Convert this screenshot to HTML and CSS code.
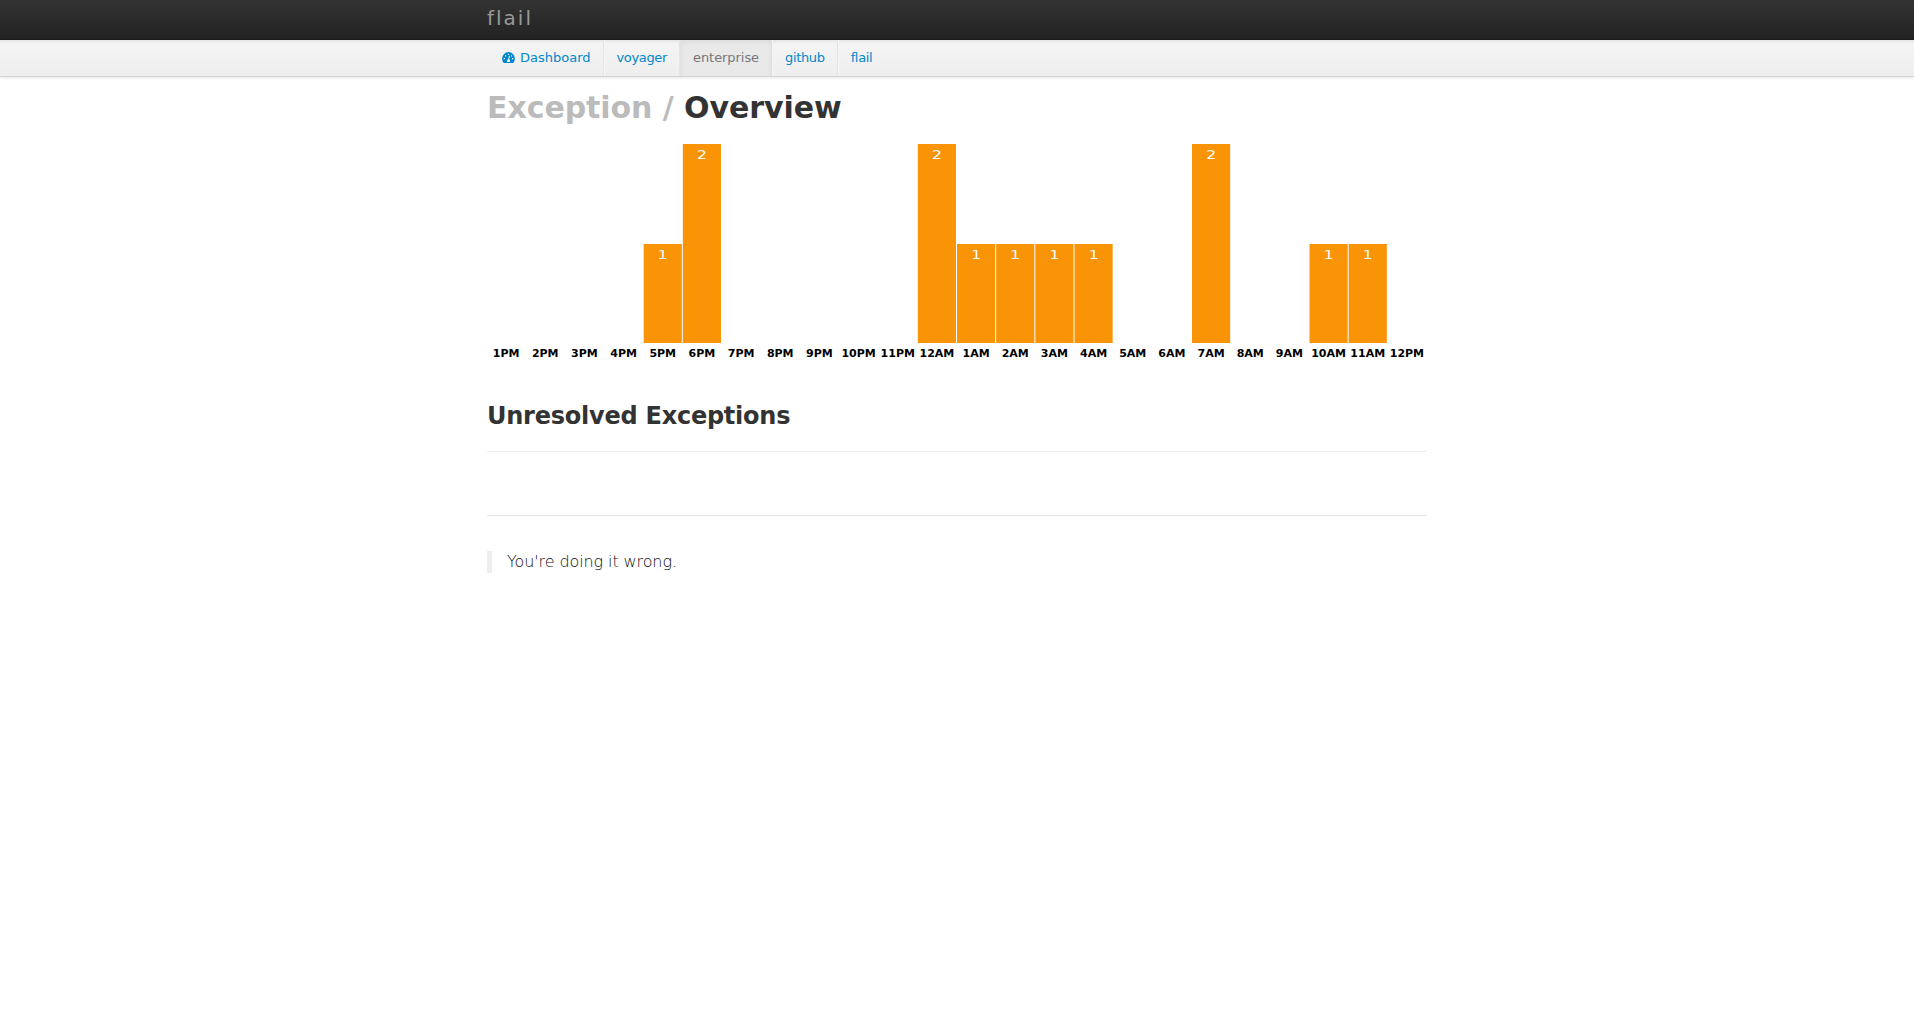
FILE: index.html
```html
<!DOCTYPE html>
<html lang="en">
<head>
<meta charset="utf-8">
<title>flail</title>
<link rel="stylesheet" href="styles.css">
</head>
<body>
<header class="navbar"><div class="container"><a class="brand">flail</a></div></header>
<nav class="subnav">
  <ul class="container tabs">
    <li><a><svg class="icon" viewBox="0 0 13 11"><path fill="currentColor" fill-rule="evenodd" d="M1.7 11A6.3 6.3 0 0 1 .2 6.4a6.3 6.3 0 0 1 12.6 0A6.3 6.3 0 0 1 11.3 11ZM5 10h3V8.2L7.2 7.3 8 4 7.1 3.8 6.2 7.2 5 8.2ZM1.8 6h1.2v1.2H1.8ZM3 3.2h1.2v1.2H3ZM5.9 1.8h1.2v1.1H5.9ZM8.9 3.2h1.2v1.2H8.9ZM10 6h1.2v1.2H10Z"/></svg>Dashboard</a></li>
    <li><a class="tight">voyager</a></li>
    <li class="active"><a>enterprise</a></li>
    <li><a class="tight">github</a></li>
    <li><a class="tight">flail</a></li>
  </ul>
</nav>
<main class="container">
  <h1><span class="muted">Exception /</span> Overview</h1>
  <svg class="chart" id="chart" width="940" height="220"></svg>
  <h2>Unresolved Exceptions</h2>
  <hr class="footer-rule">
  <blockquote>You're doing it wrong.</blockquote>
</main>
<script src="chart.js"></script>
</body>
</html>
```
FILE: chart.js
```js
const hours = ['1PM','2PM','3PM','4PM','5PM','6PM','7PM','8PM','9PM','10PM','11PM','12AM',
  '1AM','2AM','3AM','4AM','5AM','6AM','7AM','8AM','9AM','10AM','11AM','12PM'];
const counts = [0,0,0,0,1,2,0,0,0,0,0,2,1,1,1,1,0,0,2,0,0,1,1,0];
const chart = document.getElementById('chart');
const step = 940 / hours.length;

function add(name, attrs, text) {
  const el = document.createElementNS('http://www.w3.org/2000/svg', name);
  for (const key in attrs) el.setAttribute(key, attrs[key]);
  if (text) el.textContent = text;
  chart.appendChild(el);
}

hours.forEach((hour, i) => {
  const x = i * step;
  const mid = x + (step - 1) / 2;
  if (counts[i]) {
    const y = 200 - counts[i] * 100;
    add('rect', { class: 'bar', x, y, width: step - 1, height: 199 - y });
    add('text', { class: 'count', transform: `translate(${mid} ${y + 15}) scale(1.3 1)` }, String(counts[i]));
  }
  add('text', { class: 'hour', x: mid, y: 213 }, hour);
});
```
FILE: styles.css
```css
body {
  margin: 0;
  background: #fff;
  color: #333;
  font: 13px/18px "DejaVu Sans", sans-serif;
}
.container { width: 940px; margin: 0 auto; }
.navbar {
  height: 40px;
  background: linear-gradient(#333, #222);
  box-shadow: 0 1px 3px rgba(0,0,0,.25), inset 0 -1px 0 rgba(0,0,0,.1);
}
.brand {
  display: block;
  padding-top: 8px;
  font-size: 20px;
  line-height: 20px;
  letter-spacing: 2px;
  color: #999;
}
.subnav {
  height: 36px;
  background: linear-gradient(rgba(0,0,0,.07), transparent 4px), linear-gradient(#f5f5f5, #eee);
  border-bottom: 1px solid #d5d5d5;
  box-shadow: 0 1px 3px rgba(0,0,0,.1);
}
.tabs { display: flex; padding: 0; list-style: none; }
.tabs a {
  display: block;
  height: 18px;
  padding: 9px 12px;
  border-left: 1px solid #f5f5f5;
  border-right: 1px solid #e5e5e5;
  color: #08c;
  letter-spacing: -.06px;
}
.tabs .tight { letter-spacing: -.35px; }
.tabs li:first-child a { border-left: 0; padding-left: 15px; letter-spacing: 0; }
.tabs li:last-child a { border-right: 0; }
.tabs .active a {
  color: #777;
  background: #e9e9e9;
  border-left-color: #e2e2e2;
  border-right-color: #ddd;
  box-shadow: inset 0 3px 5px rgba(0,0,0,.05);
}
.icon { width: 13px; height: 11px; margin-right: 5px; vertical-align: -1px; }
h1 { margin: 13px 0 18px; font-size: 30px; line-height: 36px; letter-spacing: -.07px; }
.muted { color: #bbb; }
.chart { display: block; }
.bar { fill: #f99406; }
.count { fill: #fff; font-size: 12px; text-anchor: middle; }
.hour { fill: #000; font-size: 11px; font-weight: bold; text-anchor: middle; }
h2 {
  margin: 34px 0 0;
  padding-bottom: 17px;
  border-bottom: 1px solid #eee;
  font-size: 24px;
  line-height: 36px;
  letter-spacing: -.24px;
}
.footer-rule { margin: 63px 0 35px; border: 0; border-top: 1px solid #e5e5e5; }
blockquote {
  margin: 0;
  padding-left: 15px;
  border-left: 5px solid #eee;
  color: #111;
  font-size: 16px;
  font-weight: 200;
  line-height: 22px;
  letter-spacing: -.1px;
}
```
